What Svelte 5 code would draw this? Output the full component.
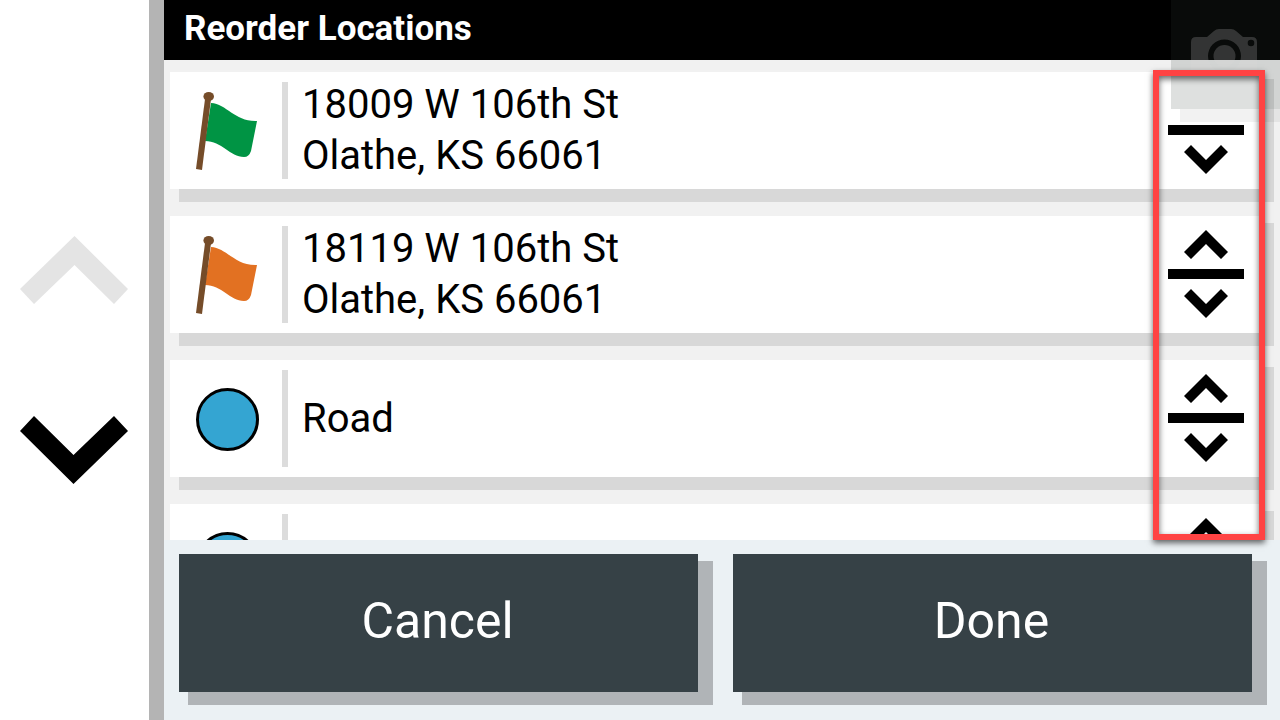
<script lang="ts">
	interface Stop {
		lines: string[];
		icon: 'flag' | 'dot';
		color: string;
	}

	const stops: Stop[] = [
		{ lines: ['18009 W 106th St', 'Olathe, KS 66061'], icon: 'flag', color: '#009444' },
		{ lines: ['18119 W 106th St', 'Olathe, KS 66061'], icon: 'flag', color: '#e27122' },
		{ lines: ['Road'], icon: 'dot', color: '#34a5d2' },
		{ lines: [], icon: 'dot', color: '#34a5d2' }
	];
</script>

<div class="screen">
	<nav class="pager" aria-label="Scroll list">
		<button class="page-button" aria-label="Scroll up" disabled>
			<svg width="108" height="68" viewBox="0 0 108 68">
				<path d="M54.500 0 108 53 94 68 54.500 29 14 68 0 53Z" fill="#e4e4e4" />
			</svg>
		</button>
		<button class="page-button" aria-label="Scroll down">
			<svg width="108" height="68" viewBox="0 0 108 68">
				<path d="M53.500 68 108 15 94 0 53.500 39 14 0 0 15Z" />
			</svg>
		</button>
	</nav>

	<main class="panel">
		<header class="title-bar">
			<h1>Reorder Locations</h1>
		</header>

		<div class="list-area">
			<ul class="stops">
				{#each stops as stop, i}
					<li class="stop">
						<div class="stop-icon">
							{#if stop.icon === 'flag'}
								<svg width="64" height="80" viewBox="0 0 64 80">
									<path d="M15 11C31 12 39 30 61 29L55 59Q53 65 48 65C34 65 26 49 9 49Z" fill={stop.color} />
									<path d="M9 7H15L6 78 0 77Z" fill="#754c29" />
									<ellipse cx="12.700" cy="4.600" rx="5.300" ry="4.600" fill="#754c29" />
								</svg>
							{:else}
								<svg width="64" height="64" viewBox="0 0 64 64">
									<circle cx="31.500" cy="31.500" r="30" fill={stop.color} stroke="#000" stroke-width="3" />
								</svg>
							{/if}
						</div>
						<div class="stop-text">
							{#each stop.lines as line}
								<span>{line}</span>
							{/each}
						</div>
						<div class="move">
							<button class="move-button" aria-label="Move up" disabled={i === 0}>
								{#if i > 0}
									<svg width="44" height="29" viewBox="0 0 44 29">
										<path d="M22 0 44 22 37 29 22 14 7 29 0 22Z" />
									</svg>
								{/if}
							</button>
							<span class="move-bar"></span>
							<button class="move-button" aria-label="Move down">
								<svg width="44" height="29" viewBox="0 0 44 29">
									<path d="M22 29 44 7 37 0 22 15 7 0 0 7Z" />
								</svg>
							</button>
						</div>
					</li>
				{/each}
			</ul>
			<div class="highlight"></div>
		</div>

		<footer class="actions">
			<button class="action">Cancel</button>
			<button class="action">Done</button>
		</footer>

		<button class="camera" aria-label="Take screenshot">
			<svg width="66" height="52" viewBox="0 0 66 52">
				<g fill="#dcdcdc" fill-opacity="0.2">
					<!-- body, with the lens ring and the lamp cut out -->
					<path
						fill-rule="evenodd"
						d="M5 8H16L23 2Q25 0 28 0H40Q43 0 45 2L52 8H61Q66 8 66 13V47Q66 52 61 52H5Q0 52 0 47V13Q0 8 5 8ZM17 27A16.500 16.500 0 0 0 50 27A16.500 16.500 0 0 0 17 27ZM56.700 14A3.300 3.300 0 0 0 63.300 14A3.300 3.300 0 0 0 56.700 14Z"
					/>
					<circle cx="33.500" cy="27" r="11" />
				</g>
			</svg>
		</button>
	</main>
</div>

<style>
	:global(body) {
		margin: 0;
	}

	.screen {
		display: flex;
		height: 100vh;
		font-family: Roboto, sans-serif;
		color: #000;
		background: #fff;
	}

	button {
		padding: 0;
		border: 0;
		background: none;
		font: inherit;
		color: inherit;
	}

	svg {
		display: block;
	}

	.pager {
		display: flex;
		flex-direction: column;
		align-items: center;
		justify-content: center;
		gap: 112px;
		flex: none;
		width: 148px;
		padding-right: 1px;
		border-right: 15px solid #b4b4b4;
	}

	.panel {
		position: relative;
		display: flex;
		flex-direction: column;
		flex: 1;
		min-width: 0;
		overflow: hidden;
	}

	.title-bar {
		display: flex;
		align-items: center;
		height: 58px;
		padding: 0 20px 2px;
		background: #000;
		color: #fff;
	}

	h1 {
		margin: 0;
		font-size: 35px;
		line-height: 40px;
		font-weight: 700;
	}

	.list-area {
		position: relative;
		flex: 1;
		min-height: 0;
	}

	.stops {
		display: flex;
		flex-direction: column;
		gap: 27px;
		height: 100%;
		box-sizing: border-box;
		margin: 0;
		padding: 12px 21px 0 6px;
		overflow: hidden;
		list-style: none;
		background: #f1f1f1;
	}

	.stop {
		display: flex;
		align-items: center;
		flex: none;
		height: 117px;
		background: #fff;
		box-shadow: 12px 10px 0 3px #d8d8d8;
	}

	.stop-icon {
		display: flex;
		align-items: center;
		height: 94px;
		width: 86px;
		padding: 3px 0 0 26px;
		border-right: 6px solid #dcdcdc;
	}

	.stop-text {
		display: flex;
		flex-direction: column;
		flex: 1;
		padding: 0 0 1px 14px;
		font-size: 40px;
		line-height: 51px;
	}

	.move {
		display: flex;
		flex-direction: column;
		align-items: center;
		gap: 10px;
		width: 76px;
		margin-right: 15px;
		padding-bottom: 1px;
	}

	.move-button {
		height: 29px;
	}

	.move-bar {
		width: 100%;
		height: 10px;
		background: #000;
	}

	.highlight {
		position: absolute;
		z-index: 2;
		top: 10px;
		right: 15px;
		bottom: 0;
		width: 100px;
		border: 6px solid #ff4343;
		box-shadow:
			0 3px 6px rgba(0, 0, 0, 0.6),
			inset 0 3px 6px rgba(0, 0, 0, 0.6);
		pointer-events: none;
	}

	.actions {
		display: flex;
		gap: 35px;
		height: 138px;
		padding: 14px 28px 28px 15px;
		background: #ebf1f4;
	}

	.action {
		flex: 1;
		padding: 0 2px 4px 0;
		background: #364146;
		color: #fff;
		font-size: 50px;
		line-height: 60px;
		box-shadow: 12px 10px 0 3px #b0b4b7;
	}

	.camera {
		position: absolute;
		z-index: 1;
		top: 0;
		right: 0;
		width: 109px;
		height: 109px;
		padding-left: 20px;
		background: rgba(55, 65, 60, 0.165);
		box-shadow: 12px 10px 0 3px rgba(0, 0, 0, 0.05);
	}
</style>
